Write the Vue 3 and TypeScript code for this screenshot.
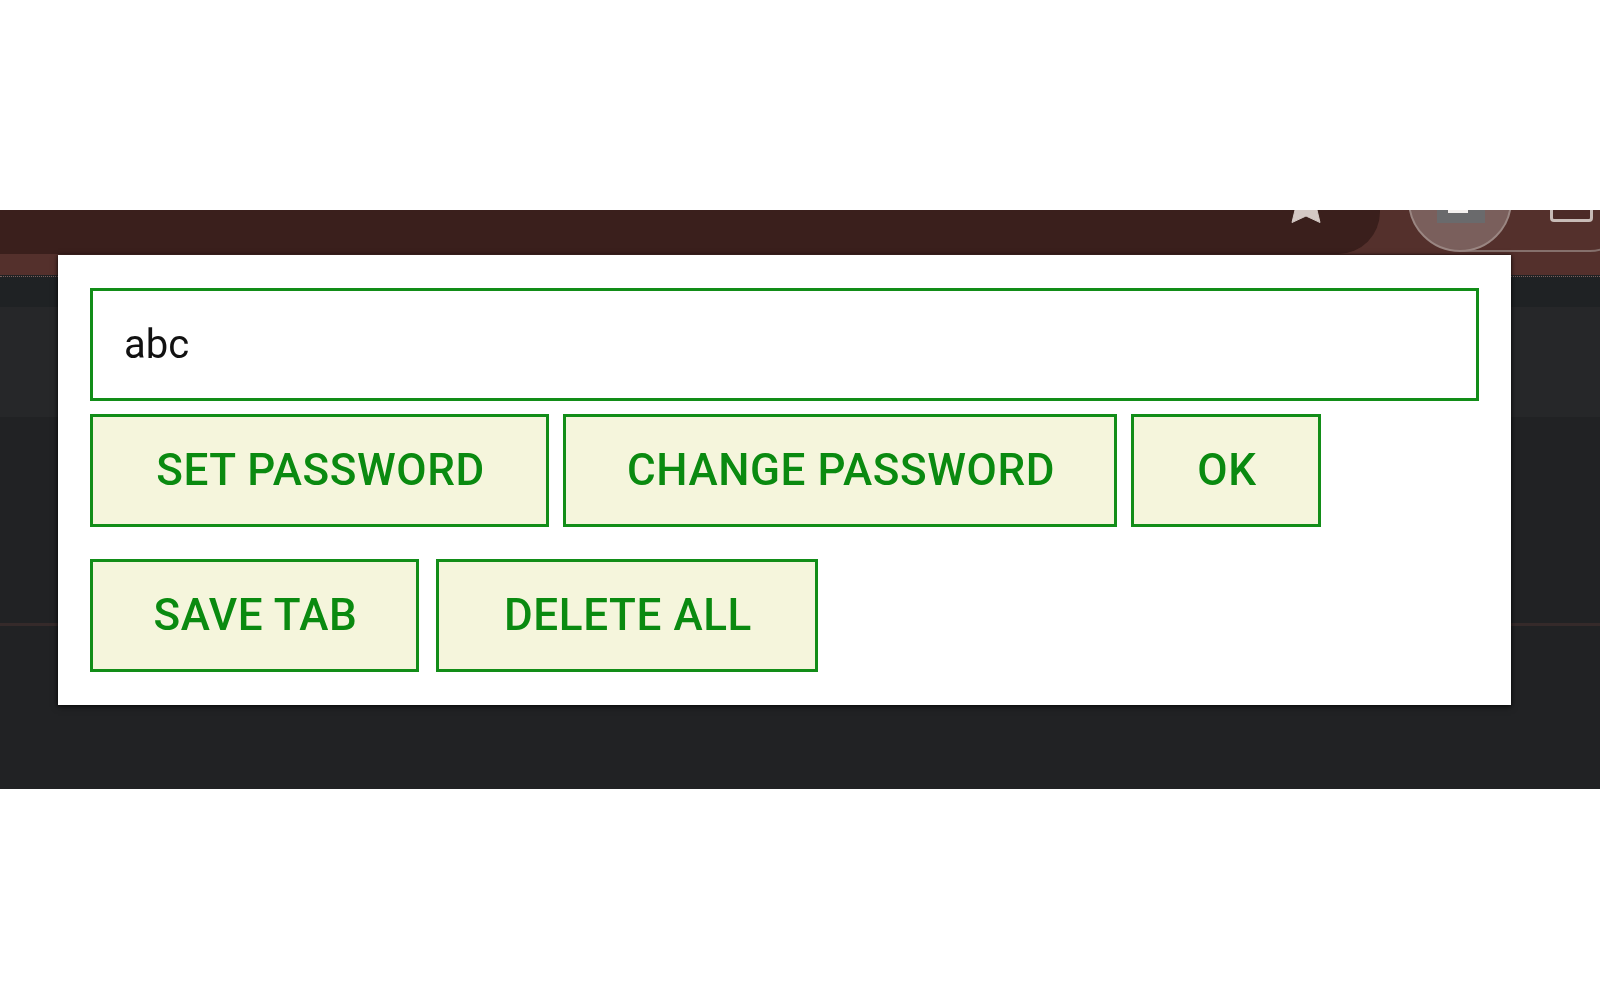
<script setup lang="ts">
interface Action {
  label: string
  width: number
}

const firstRow: Action[] = [
  { label: 'SET PASSWORD', width: 459 },
  { label: 'CHANGE PASSWORD', width: 554 },
  { label: 'OK', width: 190 },
]
const secondRow: Action[] = [
  { label: 'SAVE TAB', width: 329 },
  { label: 'DELETE ALL', width: 382 },
]
</script>

<template>
  <div class="page">
    <div class="browser">
      <div class="topbar">
        <div class="address-end"></div>
        <svg class="star" viewBox="0 0 34 14" width="34" height="14">
          <path d="M6 0 L3 12.5 L17 6 L31 12.5 L28 0 Z" fill="#d4c8c4" stroke="#d4c8c4" stroke-width="1" stroke-linejoin="round" />
        </svg>
        <div class="outline"></div>
        <div class="avatar">
          <span class="avatar-mark"></span>
          <span class="avatar-tab"></span>
        </div>
        <div class="menu-box"></div>
      </div>
      <div class="strip"></div>
      <div class="content">
        <div class="content-head"></div>
        <div class="content-band"></div>
        <div class="content-rule"></div>
      </div>
      <div class="popup">
        <input class="field" value="abc" />
        <div class="row first">
          <button v-for="b in firstRow" :key="b.label" class="btn" :style="{ width: b.width + 'px' }">{{ b.label }}</button>
        </div>
        <div class="row second">
          <button v-for="b in secondRow" :key="b.label" class="btn" :style="{ width: b.width + 'px' }">{{ b.label }}</button>
        </div>
      </div>
    </div>
  </div>
</template>

<style scoped>
.page {
  padding-top: 210px;
  height: 790px;
  box-sizing: border-box;
}
.browser {
  position: relative;
  height: 579px;
  display: flex;
  flex-direction: column;
  background: #212224;
  overflow: hidden;
  filter: blur(0.45px);
}
.topbar {
  position: relative;
  height: 65px;
  flex: none;
  background: #54302c;
  overflow: hidden;
}
.address-end {
  position: absolute;
  left: -40px;
  width: 1420px;
  top: -40px;
  height: 84px;
  background: #3a1f1c;
  border-radius: 0 42px 42px 0;
}
.star {
  position: absolute;
  left: 1289px;
  top: 0;
}
.outline {
  position: absolute;
  left: 1460px;
  top: -60px;
  width: 170px;
  height: 102px;
  box-sizing: border-box;
  border-bottom: 2px solid #85706c;
  border-right: 2px solid #85706c;
  border-radius: 0 0 40px 0;
}
.avatar {
  position: absolute;
  left: 1408px;
  top: -62px;
  width: 104px;
  height: 104px;
  box-sizing: border-box;
  border: 2px solid #9a8682;
  border-radius: 50%;
  background: #7a5f5c;
}
.avatar-mark {
  position: absolute;
  left: 27px;
  top: 60px;
  width: 48px;
  height: 13px;
  background: #6a6a6c;
}
.avatar-tab {
  position: absolute;
  left: 38px;
  top: 60px;
  width: 20px;
  height: 3px;
  background: #f4f0ee;
}
.menu-box {
  position: absolute;
  left: 1550px;
  top: -4px;
  width: 43px;
  height: 16px;
  border: 3px solid #c8bbb7;
  border-radius: 4px;
  box-sizing: border-box;
  background: #4c2a27;
}
.strip {
  height: 1px;
  flex: none;
  border-bottom: 1px dotted #7a5f5c;
}
.content {
  flex: 1;
  display: flex;
  flex-direction: column;
}
.content-head {
  height: 30px;
  background: #1f2224;
}
.content-band {
  height: 110px;
  background: #262729;
}
.content-rule {
  margin-top: 206px;
  height: 3px;
  background: #352a2a;
}
.popup {
  position: absolute;
  left: 58px;
  top: 45px;
  width: 1453px;
  height: 450px;
  box-sizing: border-box;
  padding: 33px 32px 0 32px;
  background: #fff;
  box-shadow: 0 0 3px rgba(0, 0, 0, 0.7), 0 2px 6px rgba(0, 0, 0, 0.5);
  display: flex;
  flex-direction: column;
}
.field {
  display: block;
  width: 100%;
  height: 113px;
  box-sizing: border-box;
  border: 3px solid #128d18;
  padding: 0 31px;
  font: 400 40px Roboto, sans-serif;
  color: #111;
  outline: none;
  background: #fff;
}
.row {
  display: flex;
}
.first {
  margin-top: 13px;
  gap: 14px;
}
.second {
  margin-top: 32px;
  gap: 17px;
}
.btn {
  height: 113px;
  padding: 0 0 2px 2px;
  box-sizing: border-box;
  border: 3px solid #128d18;
  background: #f5f5dc;
  color: #0a8a10;
  font: 500 44px Roboto, sans-serif;
  letter-spacing: 0.6px;
  white-space: nowrap;
}
</style>

<style>
body {
  background: #fff;
}
</style>
